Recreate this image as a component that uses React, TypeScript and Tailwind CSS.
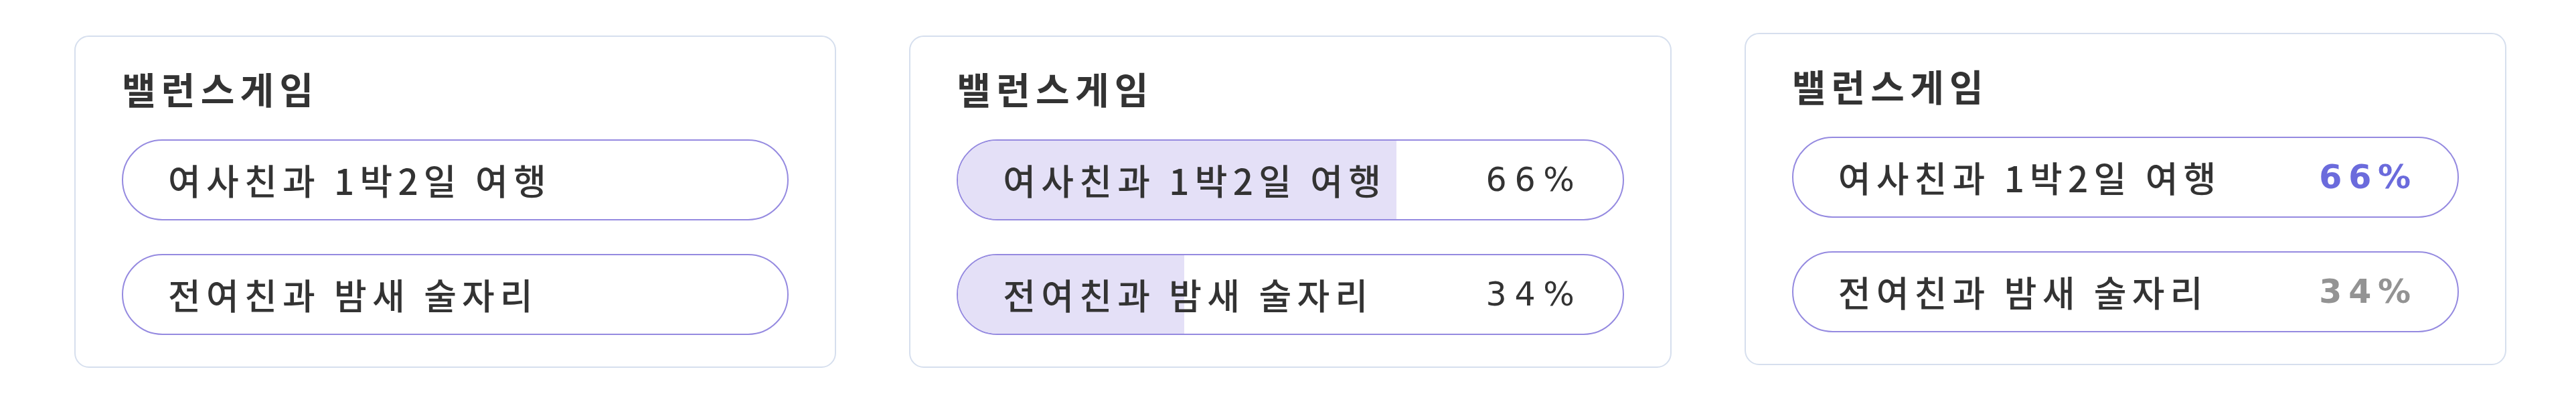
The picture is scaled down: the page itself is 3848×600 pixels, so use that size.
import React from 'react';

type Option = { label: string; percent: number };

type Variant = 'plain' | 'bar' | 'highlight';

const OPTIONS: Option[] = [
  { label: '여사친과 1박2일 여행', percent: 66 },
  { label: '전여친과 밤새 술자리', percent: 34 },
];

function OptionPill({ option, variant, isTop }: { option: Option; variant: Variant; isTop: boolean }) {
  let percentClass = 'font-normal text-[#333333] tracking-[0.24em]';
  if (variant === 'highlight') {
    percentClass = isTop
      ? 'font-bold text-[#6b6bdc] tracking-[0.2em]'
      : 'font-bold text-[#939393] tracking-[0.2em]';
  }

  return (
    <div className="relative flex h-[121px] items-center justify-between overflow-hidden rounded-full border-2 border-[#958ae0] bg-white pl-[67px] pr-[60px]">
      {variant === 'bar' ? (
        <div className="absolute inset-y-0 left-0 bg-[#e4e0f7]" style={{ width: `${option.percent}%` }} />
      ) : null}
      <span className="relative text-[53px] font-medium leading-none tracking-[0.155em] text-[#333333]">
        {option.label}
      </span>
      {variant !== 'plain' ? (
        <span className={`relative font-['DejaVu_Sans',sans-serif] text-[49px] leading-none ${percentClass}`}>
          {option.percent}%
        </span>
      ) : null}
    </div>
  );
}

function BalanceCard({ variant, className }: { variant: Variant; className?: string }) {
  const topPercent = Math.max(...OPTIONS.map((o) => o.percent));
  return (
    <div className={`rounded-[22px] border-2 border-[#d6dfee] bg-white px-[69px] pb-[47px] pt-[45px] ${className ?? ''}`}>
      <h2 className="text-[55px] font-bold leading-[62px] tracking-[0.15em] text-[#333333]">밸런스게임</h2>
      <div className="mt-[46px] flex flex-col gap-[50px]">
        {OPTIONS.map((o) => (
          <OptionPill key={o.label} option={o} variant={variant} isTop={o.percent === topPercent} />
        ))}
      </div>
    </div>
  );
}

export default function App() {
  return (
    <div className="min-h-[600px] w-full bg-white font-['Noto_Sans_CJK_KR','Noto_Sans',sans-serif]">
      <div className="grid grid-cols-3 items-start gap-[109px] pl-[111px] pr-[104px] pt-[53px]">
        <BalanceCard variant="plain" />
        <BalanceCard variant="bar" />
        <BalanceCard variant="highlight" className="-mt-1" />
      </div>
    </div>
  );
}
